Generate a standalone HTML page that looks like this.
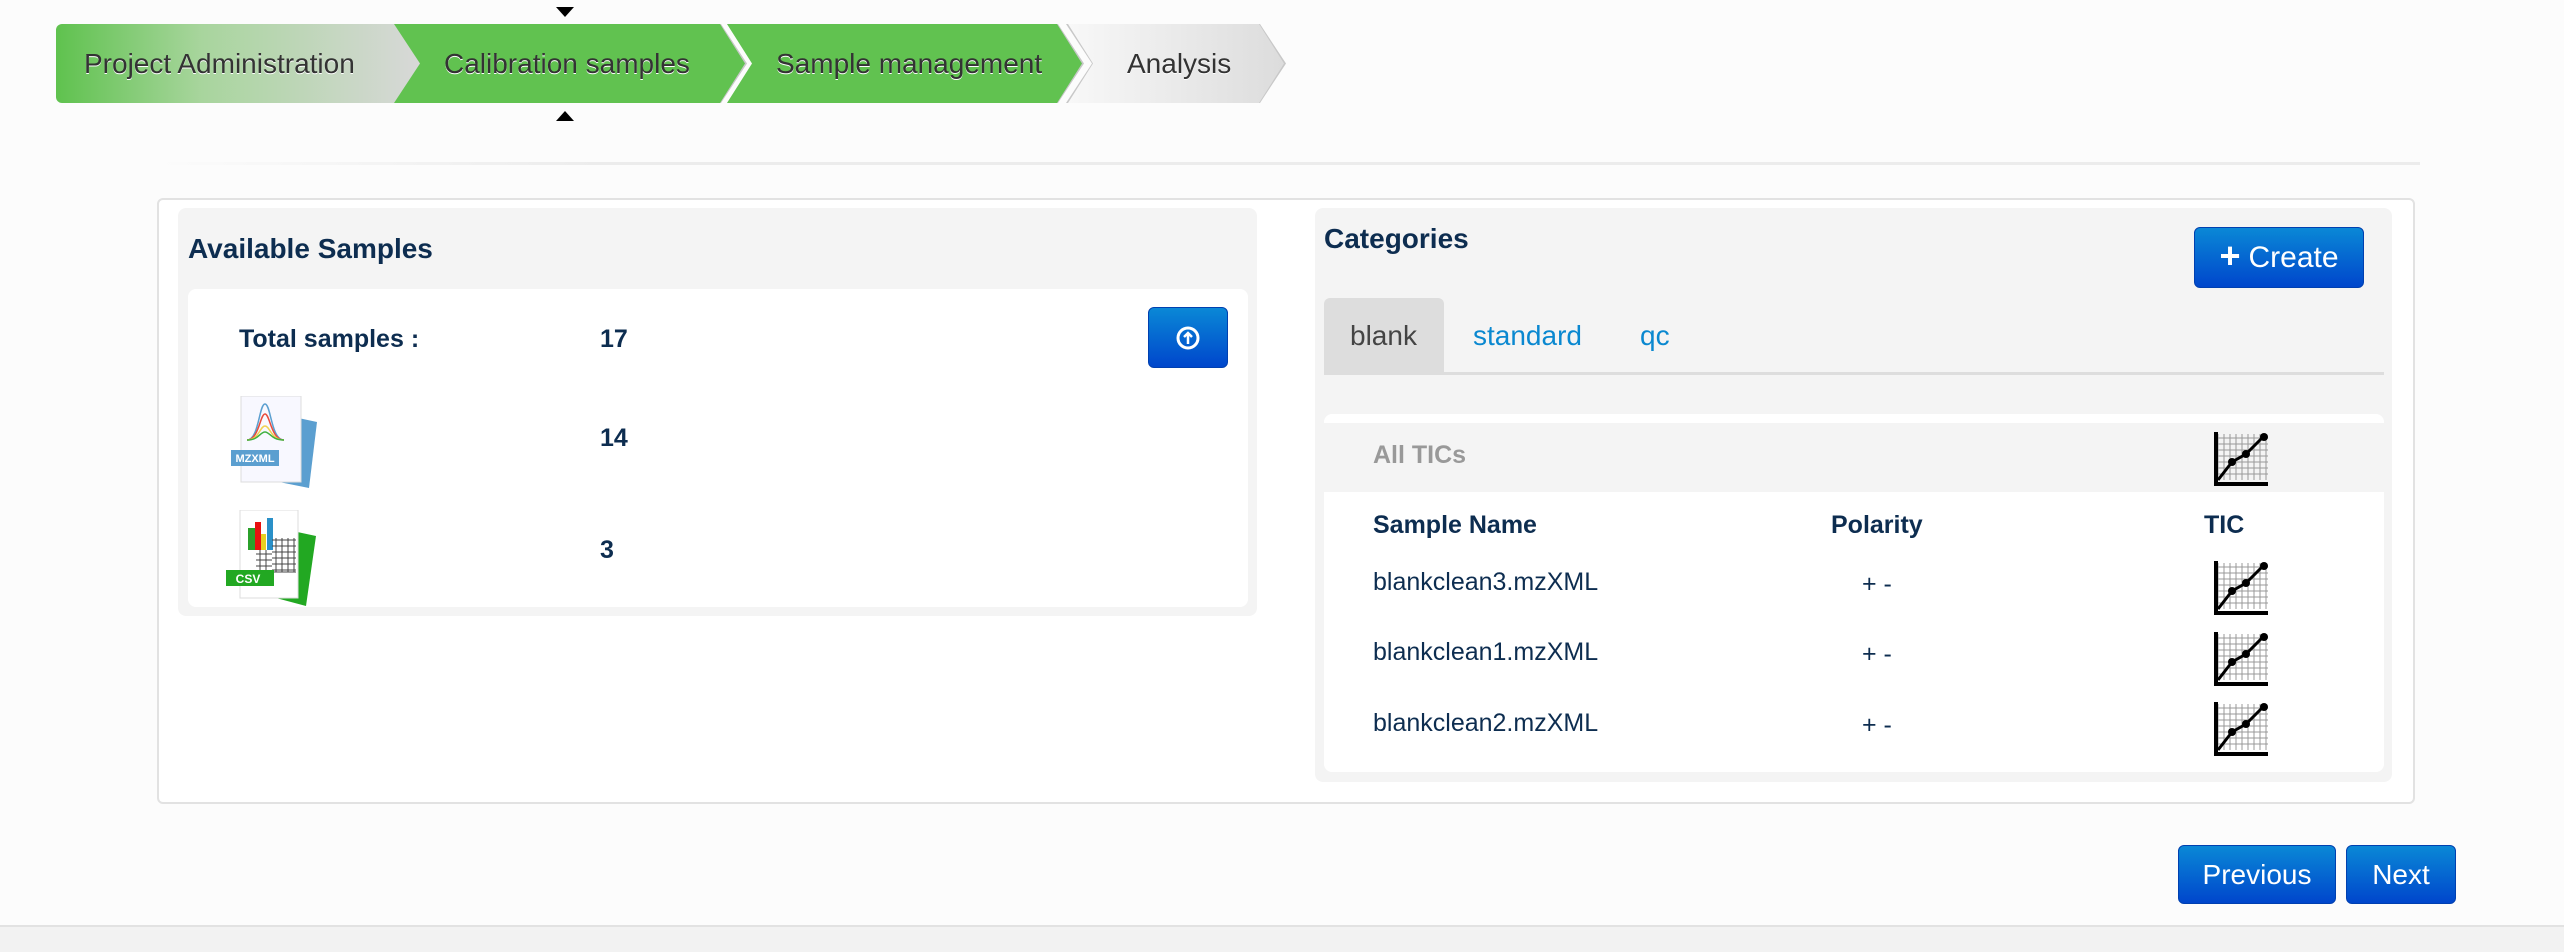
<!DOCTYPE html>
<html><head><meta charset="utf-8"><style>
*{margin:0;padding:0;box-sizing:border-box}
body{width:2564px;height:952px;background:#fcfcfc;font-family:"Liberation Sans",Arial,sans-serif;position:relative;overflow:hidden;color:#0d2d50}
.a{position:absolute}
.step{position:absolute;top:24px;height:79px;display:flex;align-items:center;font-size:28px;color:#333;text-shadow:0 1px 0 #fff}
.b{font-weight:bold}
.t{font-size:25px}
.btn{position:absolute;background:linear-gradient(#0a88d6,#0046cc);border:1px solid #0040b0;border-radius:6px;color:#fff;display:flex;align-items:center;justify-content:center;font-size:28px}
</style></head><body>
<!-- wizard -->
<div class="a" style="left:556px;top:7px;width:0;height:0;border-left:9px solid transparent;border-right:9px solid transparent;border-top:10px solid #000"></div>
<div class="a" style="left:556px;top:111px;width:0;height:0;border-left:9px solid transparent;border-right:9px solid transparent;border-bottom:10px solid #000"></div>
<div class="step" style="left:1066px;width:220px;background:#c8c8c8;clip-path:polygon(0 0,194px 0,220px 50%,194px 100%,0 100%,26px 50%)"></div>
<div class="step" style="left:1068px;width:216px;background:linear-gradient(90deg,#f8f8f8,#dcdcdc);clip-path:polygon(0 0,191px 0,216px 50%,191px 100%,0 100%,25px 50%);padding-left:59px">Analysis</div>
<div class="step" style="left:727px;width:357px;background:#c8c8c8;clip-path:polygon(0 0,331px 0,357px 50%,331px 100%,0 100%,26px 50%)"></div>
<div class="step" style="left:727px;width:355px;background:#61c250;clip-path:polygon(0 0,330px 0,355px 50%,330px 100%,0 100%,25px 50%);padding-left:49px">Sample management</div>
<div class="step" style="left:392px;width:355px;background:#c8c8c8;clip-path:polygon(0 0,329px 0,355px 50%,329px 100%,0 100%,26px 50%)"></div>
<div class="step" style="left:392px;width:353px;background:#61c250;clip-path:polygon(0 0,328px 0,353px 50%,328px 100%,0 100%,25px 50%);padding-left:52px">Calibration samples</div>
<div class="step" style="left:56px;width:364px;border-radius:6px 0 0 6px;background:linear-gradient(90deg,#5fc24e 0%,#a8d59d 40%,#d8d8d8 100%);clip-path:polygon(0 0,338px 0,364px 50%,338px 100%,0 100%);padding-left:28px">Project Administration</div>
<div class="a" style="left:150px;top:162px;width:2270px;height:3px;background:linear-gradient(90deg,rgba(230,230,230,0),#ececec 20%,#ececec)"></div>
<!-- main panel -->
<div class="a" style="left:157px;top:198px;width:2258px;height:606px;background:#fff;border:2px solid #e2e2e2;border-radius:6px"></div>
<!-- left well -->
<div class="a" style="left:178px;top:208px;width:1079px;height:408px;background:#f4f4f4;border-radius:8px"></div>
<div class="a b" style="left:188px;top:233px;font-size:28px">Available Samples</div>
<div class="a" style="left:188px;top:289px;width:1060px;height:318px;background:#fff;border-radius:8px"></div>
<div class="a b t" style="left:239px;top:325px">Total samples :</div>
<div class="a b t" style="left:600px;top:325px">17</div>
<div class="btn" style="left:1148px;top:307px;width:80px;height:61px"><svg width="26" height="26" viewBox="0 0 26 26"><circle cx="13" cy="13" r="10" fill="none" stroke="#fff" stroke-width="3"/><path d="M13 19V8M9 12l4-4 4 4" stroke="#fff" stroke-width="2.5" fill="none"/></svg></div>
<!-- mzxml icon -->
<svg class="a" style="left:229px;top:396px" width="90" height="92" viewBox="0 0 90 92"><polygon points="60,20 88,26 80,92 50,86" fill="#5b9fd0"/><rect x="12" y="0" width="60" height="86" fill="#f8f8ff" stroke="#ddd"/><path d="M18 44 C30 44 30 8 36 8 C42 8 42 44 55 44" fill="none" stroke="#5b9fd0" stroke-width="1.5"/><path d="M18 44 C30 44 31 18 36 18 C41 18 42 44 55 44" fill="none" stroke="#e84c3c" stroke-width="1.5"/><path d="M18 44 C30 44 31 30 36 30 C41 30 42 44 55 44" fill="none" stroke="#f0d050" stroke-width="1.5"/><path d="M18 44 C30 44 31 36 36 36 C41 36 42 44 55 44" fill="none" stroke="#40b040" stroke-width="1.5"/><rect x="2" y="54" width="48" height="16" fill="#5b9fd0"/><text x="26" y="66" fill="#fff" font-size="11" font-weight="bold" text-anchor="middle" font-family="Liberation Sans">MZXML</text></svg>
<div class="a b t" style="left:600px;top:424px">14</div>
<!-- csv icon -->
<svg class="a" style="left:226px;top:510px" width="92" height="96" viewBox="0 0 92 96"><polygon points="62,20 90,26 80,96 50,88" fill="#22a822"/><rect x="14" y="0" width="58" height="88" fill="#fff" stroke="#ddd"/><rect x="22" y="18" width="8" height="22" fill="#2aa02a"/><rect x="29" y="12" width="6" height="28" fill="#e81010"/><rect x="35" y="24" width="5" height="16" fill="#e8d020"/><rect x="41" y="8" width="6" height="32" fill="#2a90c8"/><path d="M46 30h24M46 36h24M46 42h24M46 48h24M46 54h24M46 60h24M50 28v34M56 28v34M62 28v34M68 28v34M30 44h16M30 50h16M30 56h16M30 62h40M34 40v22M40 40v22" stroke="#444" stroke-width="1"/><rect x="0" y="60" width="48" height="16" fill="#22a822"/><text x="22" y="73" fill="#fff" font-size="12" font-weight="bold" text-anchor="middle" font-family="Liberation Sans">CSV</text></svg>
<div class="a b t" style="left:600px;top:536px">3</div>
<!-- right well -->
<div class="a" style="left:1315px;top:208px;width:1077px;height:574px;background:#f4f4f4;border-radius:8px"></div>
<div class="a b" style="left:1324px;top:223px;font-size:28px">Categories</div>
<div class="btn" style="left:2194px;top:227px;width:170px;height:61px;font-size:30px"><b style="font-size:36px;margin-right:8px;margin-top:-4px">+</b>Create</div>
<div class="a" style="left:1324px;top:298px;width:120px;height:75px;background:#ddd;border-radius:6px 6px 0 0"></div>
<div class="a" style="left:1350px;top:320px;font-size:28px;color:#444">blank</div>
<div class="a" style="left:1473px;top:320px;font-size:28px;color:#0a88d0">standard</div>
<div class="a" style="left:1640px;top:320px;font-size:28px;color:#0a88d0">qc</div>
<div class="a" style="left:1324px;top:372px;width:1060px;height:3px;background:#ddd"></div>
<div class="a" style="left:1324px;top:414px;width:1060px;height:358px;background:#fff;border-radius:8px"></div>
<div class="a" style="left:1324px;top:423px;width:1060px;height:69px;background:#f4f4f4"></div>
<div class="a b t" style="left:1373px;top:441px;color:#999">All TICs</div>
<div class="a b t" style="left:1373px;top:511px">Sample Name</div>
<div class="a b t" style="left:1831px;top:511px">Polarity</div>
<div class="a b t" style="left:2204px;top:511px">TIC</div>
<div class="a t" style="left:1373px;top:568px">blankclean3.mzXML</div>
<div class="a t" style="left:1373px;top:638px">blankclean1.mzXML</div>
<div class="a t" style="left:1373px;top:709px">blankclean2.mzXML</div>
<div class="a t" style="left:1862px;top:570px">+ -</div>
<div class="a t" style="left:1862px;top:640px">+ -</div>
<div class="a t" style="left:1862px;top:711px">+ -</div>
<svg width="0" height="0" style="position:absolute"><defs><g id="tic"><path d="M4 2v46M10 2v46M16 2v46M22 2v46M28 2v46M34 2v46M40 2v46M46 2v46M52 2v46M4 6h50M4 12h50M4 18h50M4 24h50M4 30h50M4 36h50M4 42h50" stroke="#999" stroke-width="1"/><path d="M2 0v52h52" stroke="#000" stroke-width="4" fill="none"/><path d="M4 48L18 30L32 22L50 4" stroke="#000" stroke-width="3" fill="none"/><circle cx="18" cy="30" r="4"/><circle cx="32" cy="22" r="4"/><circle cx="50" cy="5" r="4"/></g></defs></svg>
<svg class="a" style="left:2214px;top:432px" width="56" height="54"><use href="#tic"/></svg>
<svg class="a" style="left:2214px;top:561px" width="56" height="54"><use href="#tic"/></svg>
<svg class="a" style="left:2214px;top:632px" width="56" height="54"><use href="#tic"/></svg>
<svg class="a" style="left:2214px;top:702px" width="56" height="54"><use href="#tic"/></svg>
<!-- nav -->
<div class="btn" style="left:2178px;top:845px;width:158px;height:59px">Previous</div>
<div class="btn" style="left:2346px;top:845px;width:110px;height:59px">Next</div>
<div class="a" style="left:0;top:925px;width:2564px;height:27px;background:#f2f2f2;border-top:2px solid #e2e2e2"></div>
</body></html>
